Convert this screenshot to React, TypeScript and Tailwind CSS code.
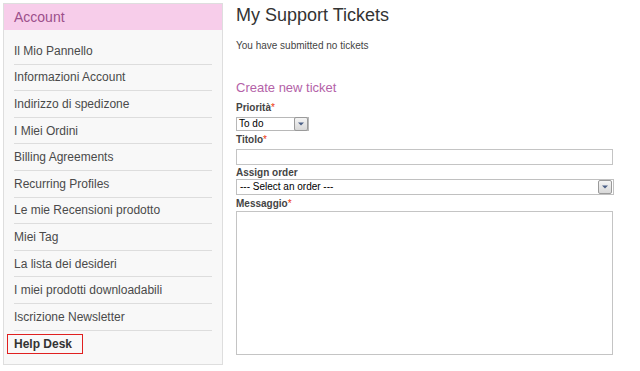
import React from 'react';

const menuItems = [
  'Il Mio Pannello',
  'Informazioni Account',
  'Indirizzo di spedizone',
  'I Miei Ordini',
  'Billing Agreements',
  'Recurring Profiles',
  'Le mie Recensioni prodotto',
  'Miei Tag',
  'La lista dei desideri',
  'I miei prodotti downloadabili',
  'Iscrizione Newsletter',
];

const DropButton = () => (
  <div className="flex h-[14px] w-[14px] items-center justify-center rounded-[2px] border border-[#9a9a9a] bg-gradient-to-b from-[#f4f4f4] to-[#d8d8d8]">
    <svg width="6" height="4" viewBox="0 0 6 4">
      <path d="M0 0.5h6L3 3.5z" fill="#4a5f86" />
    </svg>
  </div>
);

const Label = ({ text, required }: { text: string; required?: boolean }) => (
  <div className="text-[10px] font-bold leading-[13px] text-[#444]">
    {text}
    {required && <span className="font-normal text-[#eb340a]">*</span>}
  </div>
);

export default function App() {
  return (
    <div className="flex h-[371px] w-[640px] bg-white font-['Liberation_Sans',Arial,sans-serif]">
      {/* Sidebar */}
      <aside className="ml-[3px] mt-[3px] h-[362px] w-[220px] border border-[#dedede] bg-[#f8f8f8]">
        <div className="h-[26px] bg-[#f7cdea] pl-[10px] text-[14px] leading-[26px] text-[#9c4f8b]">
          Account
        </div>
        <ul className="px-[10px] pt-[8px]">
          {menuItems.map((item) => (
            <li
              key={item}
              className="flex h-[26.6px] items-center border-b border-[#dddddd] text-[12px] text-[#4a4a4a]"
            >
              {item}
            </li>
          ))}
          <li className="flex h-[26.6px] items-center">
            <span className="-ml-[7px] mt-[1px] flex h-[20px] w-[76px] items-center border border-[#e02020] pl-[6px] text-[12px] font-bold text-[#333]">
              Help Desk
            </span>
          </li>
        </ul>
      </aside>

      {/* Main */}
      <main className="ml-[13px] w-[378px] pt-[4px]">
        <h1 className="text-[18px] leading-[22px] text-[#333]">My Support Tickets</h1>
        <p className="mt-[14px] text-[10px] leading-[12px] text-[#444]">You have submitted no tickets</p>

        <h2 className="mt-[28px] text-[13px] leading-[16px] text-[#b462a8]">Create new ticket</h2>

        <div className="mt-[5px]">
          <Label text="Priorità" required />
        </div>
        <div className="mt-[3px] flex h-[14px] w-[73px] items-center justify-between border border-[#b8b8b8] bg-white pl-[2px]">
          <span className="text-[10px] leading-[12px] text-black">To do</span>
          <DropButton />
        </div>

        <div className="mt-[2px]">
          <Label text="Titolo" required />
        </div>
        <div className="mt-[3px] h-[16px] w-[377px] border border-[#c4c4c4] bg-white" />

        <div className="mt-[1px]">
          <Label text="Assign order" />
        </div>
        <div className="flex h-[16px] w-[378px] items-center justify-between border border-[#c0c0c0] bg-white pl-[3px] pr-[1px]">
          <span className="text-[10px] leading-[12px] text-black">--- Select an order ---</span>
          <DropButton />
        </div>

        <div className="mt-[2px]">
          <Label text="Messaggio" required />
        </div>
        <div className="mt-[1px] h-[144px] w-[377px] border border-[#c4c4c4] bg-white" />
      </main>
    </div>
  );
}
